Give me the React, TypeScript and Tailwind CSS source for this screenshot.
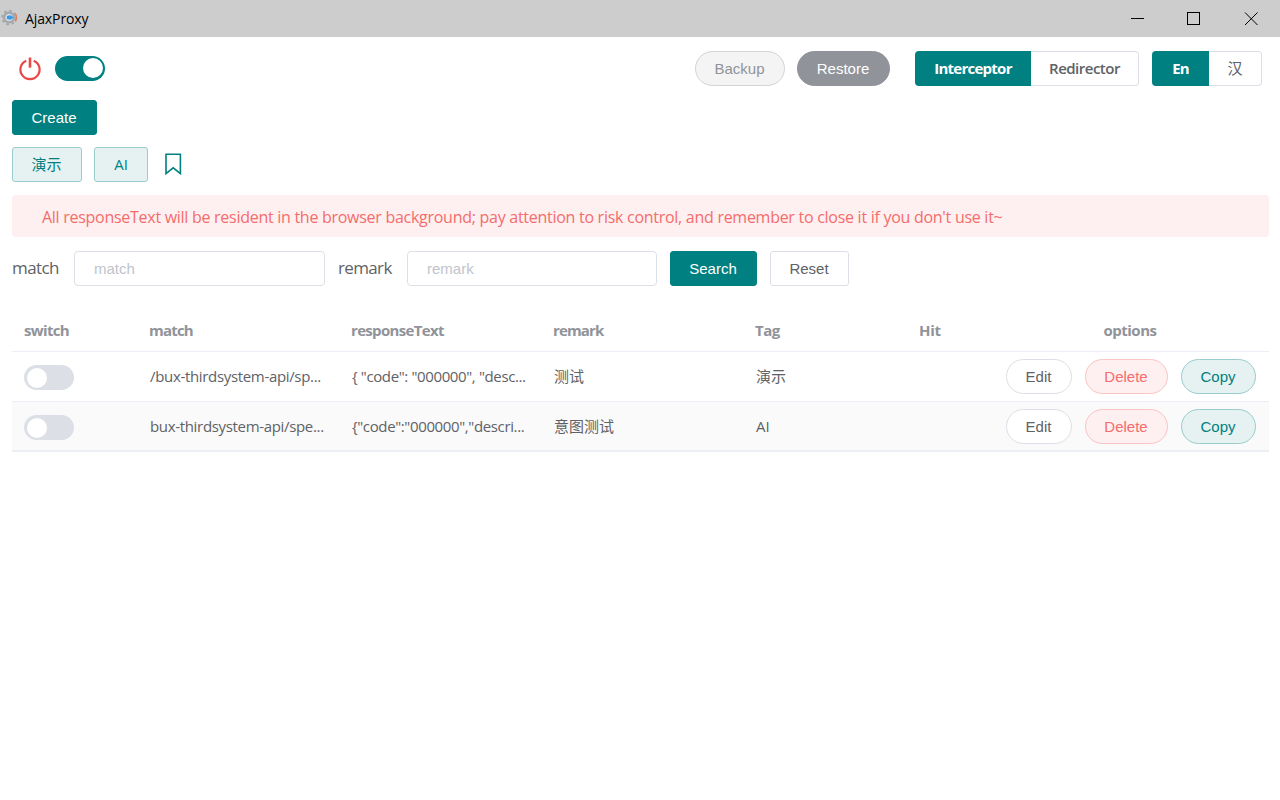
import React, { useState } from "react";

type Rule = {
  match: string;
  responseText: string;
  remark: string;
  tag: string;
};

const rules: Rule[] = [
  {
    match: "/bux-thirdsystem-api/sp...",
    responseText: '{ "code": "000000", "desc...',
    remark: "测试",
    tag: "演示",
  },
  {
    match: "bux-thirdsystem-api/spe...",
    responseText: '{"code":"000000","descri...',
    remark: "意图测试",
    tag: "AI",
  },
];

const btn =
  "flex h-[35px] shrink-0 items-center justify-center border pr-px font-['Liberation_Sans',Arial,sans-serif] text-[15px] leading-none";

const columns =
  "grid grid-cols-[125px_202px_202px_202px_164px_84px_278px] items-center";

const Toggle = ({ on, onChange }: { on: boolean; onChange: () => void }) => (
  <button
    onClick={onChange}
    className={`flex h-[25px] w-[50px] items-center rounded-full ${
      on ? "justify-end bg-[#008080] pr-0.5" : "justify-start bg-[#dcdfe6] pl-[3px]"
    }`}
  >
    <span className={`size-5 rounded-full bg-white ${on ? "mb-px" : "mt-px"}`} />
  </button>
);

const TitleBar = () => (
  <header className="flex h-[37px] items-center bg-[#cdcdcd]">
    <svg viewBox="0 0 18 18" className="mb-0.5 ml-px size-[17px]">
      <circle cx="8.5" cy="9" r="5.2" fill="#d3d9de" stroke="#a3a6a9" strokeWidth="2.4" />
      <circle cx="8.5" cy="9" r="7.3" fill="none" stroke="#a3a6a9" strokeWidth="1.8" strokeDasharray="2.8 2.93" />
      <path d="M15 5a7 7 0 0 1 0 8" fill="none" stroke="#d98262" strokeWidth="1.8" />
      <path d="M6.3 7.3l3.7-.8L13.5 9 10 11.5l-3.7-.8z" fill="#2e9df0" />
    </svg>
    <span className="ml-[7px] text-[14px] tracking-[-0.1px] text-black">
      AjaxProxy
    </span>
    <div className="ml-auto flex items-center">
      <svg width="150" height="37" fill="none" stroke="#000" shapeRendering="crispEdges">
        <path d="M1 18.5h13M57.5 12.5h12v12h-12z" />
        <path d="M115 12.5l12.5 12.5M127.5 12.5L115 25" shapeRendering="auto" />
      </svg>
    </div>
  </header>
);

const App = () => {
  const [enabled, setEnabled] = useState(true);
  const [mode, setMode] = useState("Interceptor");
  const [lang, setLang] = useState("En");
  const [active, setActive] = useState([false, false]);

  return (
    <div className="min-h-[800px] w-[1280px] bg-white font-['Open_Sans','Noto_Sans_CJK_SC',sans-serif] text-[15px] text-[#606266]">
      <TitleBar />
      <main className="pt-3.5 pr-[11px] pl-3">
        {/* Toolbar */}
        <div className="flex h-[35px] items-center">
          <svg viewBox="0 0 24 24" className="ml-1.5 size-6" fill="none" stroke="#ea4748" strokeWidth="2.2">
            <path d="M8.3 3.7a9.6 9.6 0 1 0 7.4 0" />
            <path d="M12 .5v10.2" strokeWidth="2.6" />
          </svg>
          <div className="ml-[13px]">
            <Toggle on={enabled} onChange={() => setEnabled(!enabled)} />
          </div>
          <button className={`${btn} ml-auto w-[90px] rounded-full border-[#d3d4d6] bg-[#f4f4f5] text-[#909399]`}>
            Backup
          </button>
          <button className={`${btn} ml-3 w-[93px] rounded-full border-[#909399] bg-[#909399] text-white`}>
            Restore
          </button>
          <div className="ml-[25px] flex h-[35px] text-[15px]">
            <button
              onClick={() => setMode("Interceptor")}
              className="w-[116px] rounded-l bg-[#008080] font-bold tracking-[-0.75px] text-white"
            >
              Interceptor
            </button>
            <button
              onClick={() => setMode("Redirector")}
              className="w-[108px] rounded-r border border-l-0 border-[#dcdfe6] font-semibold tracking-[-0.5px]"
            >
              Redirector
            </button>
          </div>
          <div className="mr-[7px] ml-[13px] flex h-[35px]">
            <button
              onClick={() => setLang("En")}
              className="w-[57px] rounded-l bg-[#008080] font-bold tracking-[-0.8px] text-white"
            >
              En
            </button>
            <button
              onClick={() => setLang("汉")}
              className="w-[53px] rounded-r border border-l-0 border-[#dcdfe6]"
            >
              汉
            </button>
          </div>
        </div>

        <button className={`${btn} mt-3.5 w-[85px] rounded-[3px] border-[#008080] bg-[#008080] text-white`}>
          Create
        </button>

        {/* Tags */}
        <div className="mt-3 flex items-center gap-3">
          <button className="h-[35px] w-[70px] rounded-[3px] border border-[#99cccc] bg-[#e6f2f2] pr-px text-[#008080]">
            演示
          </button>
          <button className="h-[35px] w-[54px] rounded-[3px] border border-[#99cccc] bg-[#e6f2f2] text-[#008080]">
            AI
          </button>
          <svg viewBox="0 0 18 24" className="mb-0.5 ml-1 h-6 w-[18px]" fill="none" stroke="#008080" strokeWidth="1.6">
            <path d="M2 2.2h14.4v19.4L9.2 15.8 2 21.6z" />
          </svg>
        </div>

        <div className="mt-[13px] flex h-[42px] items-center rounded bg-[#fef0f0] pt-0.5 pl-[30px] text-[16px] tracking-[-0.275px] whitespace-nowrap text-[#f56c6c]">
          All responseText will be resident in the browser background; pay attention to risk control, and remember to close it if you don't use it~
        </div>

        {/* Filters */}
        <div className="mt-3.5 flex h-[35px] items-center">
          <label className="w-[62px] pb-0.5 text-[17px] tracking-[-0.6px]">match</label>
          <input
            placeholder="match"
            className="h-[35px] w-[251px] rounded border border-[#dcdfe6] px-[19px] font-['Liberation_Sans',Arial,sans-serif] text-[15px] placeholder:text-[#c0c4cc]"
          />
          <label className="ml-[13px] w-[69px] pb-0.5 text-[17px] tracking-[-0.65px]">remark</label>
          <input
            placeholder="remark"
            className="h-[35px] w-[250px] rounded border border-[#dcdfe6] px-[19px] font-['Liberation_Sans',Arial,sans-serif] text-[15px] placeholder:text-[#c0c4cc]"
          />
          <button className={`${btn} ml-[13px] w-[87px] rounded-[3px] border-[#008080] bg-[#008080] text-white`}>
            Search
          </button>
          <button className={`${btn} ml-[13px] w-[79px] rounded-[3px] border-[#dcdfe6] bg-white`}>
            Reset
          </button>
        </div>

        {/* Rules table */}
        <div className="mt-[25px] border-b border-[#ebeef5] whitespace-nowrap">
          <div className={`${columns} h-[41px] border-b border-[#ebeef5] pb-0.5 font-bold text-[#909399]`}>
            <span className="pl-3 tracking-[-0.65px]">switch</span>
            <span className="pl-3 tracking-[-0.8px]">match</span>
            <span className="pl-3 tracking-[-0.67px]">responseText</span>
            <span className="pl-3 tracking-[-0.85px]">remark</span>
            <span className="pl-3 tracking-[-0.5px]">Tag</span>
            <span className="pl-3 tracking-[-0.3px]">Hit</span>
            <span className="text-center tracking-[-0.5px]">options</span>
          </div>
          {rules.map((rule, i) => (
            <div
              key={rule.match}
              className={`${columns} border-b border-[#ebeef5] ${i % 2 ? "h-[49px] bg-[#fafafa]" : "h-[50px]"}`}
            >
              <div className="pt-0.5 pl-3">
                <Toggle
                  on={active[i]}
                  onChange={() => setActive(active.map((v, j) => (j === i ? !v : v)))}
                />
              </div>
              <span className="pl-[13px] tracking-[-0.33px]">{rule.match}</span>
              <span className="pl-[13px] tracking-[-0.37px]">{rule.responseText}</span>
              <span className="pl-[13px]">{rule.remark}</span>
              <span className="pl-[13px]">{rule.tag}</span>
              <span />
              <div className="flex gap-[13px] pl-[15px]">
                <button className={`${btn} w-[66px] rounded-full border-[#dcdfe6] bg-white`}>Edit</button>
                <button className={`${btn} w-[83px] rounded-full border-[#fbc4c4] bg-[#fef0f0] text-[#f56c6c]`}>
                  Delete
                </button>
                <button className={`${btn} w-[75px] rounded-full border-[#99cccc] bg-[#e6f2f2] text-[#008080]`}>
                  Copy
                </button>
              </div>
            </div>
          ))}
        </div>
      </main>
    </div>
  );
};

export default App;
